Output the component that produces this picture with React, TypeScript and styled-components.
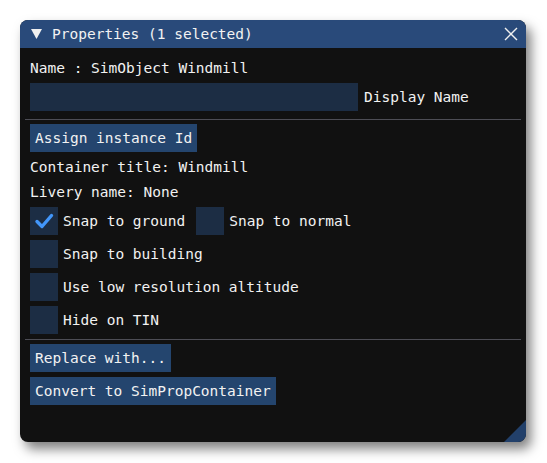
import React from "react";
import styled, { createGlobalStyle } from "styled-components";

const Global = createGlobalStyle`
  html, body { margin: 0; padding: 0; background: #ffffff; }
  body { width: 547px; height: 463px; overflow: hidden; }
`;

const Page = styled.div`
  padding: 20px 0 0 20px;
`;

const Window = styled.div`
  width: 506px;
  height: 422px;
  background: #111111;
  border-radius: 8px;
  overflow: hidden;
  position: relative;
  box-shadow: 5px 7px 12px rgba(0, 0, 0, 0.5);
  font-family: "DejaVu Sans Mono", "Liberation Mono", monospace;
  font-size: 14.5px;
  color: #f2f2f2;
  display: flex;
  flex-direction: column;
`;

const TitleBar = styled.div`
  height: 28px;
  background: #294a7a;
  display: flex;
  align-items: center;
  padding: 0 8px 0 11px;
  gap: 10px;
`;

const Title = styled.span`
  flex: 1;
  line-height: 28px;
`;

const Content = styled.div`
  padding: 10px 10px 0 10px;
  display: flex;
  flex-direction: column;
  gap: 5px;
`;

const Label = styled.div`
  height: 20px;
  line-height: 20px;
  white-space: pre;
`;

const InputRow = styled.div`
  display: flex;
  align-items: center;
  gap: 6px;
`;

const Field = styled.div`
  width: 328px;
  height: 28px;
  background: #1c2d44;
`;

const Separator = styled.div<{ $top: number }>`
  height: 1px;
  background: #4d4d55;
  margin: ${(p) => p.$top}px -5px -1px -5px;
`;

const Button = styled.div`
  align-self: flex-start;
  height: 28px;
  line-height: 28px;
  padding: 0 5px;
  background: #24456e;
  white-space: pre;
`;

const CheckRow = styled.div`
  display: flex;
  align-items: center;
  height: 28px;
`;

const Check = styled.label`
  display: flex;
  align-items: center;
  gap: 5px;
  margin-right: 11px;
`;

const Box = styled.span`
  width: 28px;
  height: 28px;
  background: #1c2d44;
  display: flex;
  align-items: center;
  justify-content: center;
`;

const Grip = styled.svg`
  position: absolute;
  right: 0;
  bottom: 0;
`;

function Checkbox({ label, checked }: { label: string; checked?: boolean }) {
  return (
    <Check>
      <Box>
        {checked && (
          <svg width="20" height="20" viewBox="0 0 20 20">
            <path d="M3 10.5 L8 15.5 L17.5 4.5" fill="none" stroke="#4296fa" strokeWidth="3.4" strokeLinecap="round" strokeLinejoin="round" />
          </svg>
        )}
      </Box>
      <span>{label}</span>
    </Check>
  );
}

export default function App() {
  return (
    <Page>
      <Global />
      <Window>
        <TitleBar>
          <svg width="11" height="10" viewBox="0 0 11 10">
            <path d="M0 0 H11 L5.5 10 Z" fill="#f0f0f0" />
          </svg>
          <Title>Properties (1 selected)</Title>
          <svg width="14" height="14" viewBox="0 0 14 14">
            <path d="M1 1 L13 13 M13 1 L1 13" stroke="#f0f0f0" strokeWidth="1.4" />
          </svg>
        </TitleBar>
        <Content>
          <Label>Name : SimObject Windmill</Label>
          <InputRow>
            <Field />
            <span>Display Name</span>
          </InputRow>
          <Separator $top={3} />
          <Button>Assign instance Id</Button>
          <Label>Container title: Windmill</Label>
          <Label>Livery name: None</Label>
          <CheckRow>
            <Checkbox label="Snap to ground" checked />
            <Checkbox label="Snap to normal" />
          </CheckRow>
          <CheckRow>
            <Checkbox label="Snap to building" />
          </CheckRow>
          <CheckRow>
            <Checkbox label="Use low resolution altitude" />
          </CheckRow>
          <CheckRow>
            <Checkbox label="Hide on TIN" />
          </CheckRow>
          <Separator $top={0} />
          <Button>Replace with...</Button>
          <Button>Convert to SimPropContainer</Button>
        </Content>
        <Grip width="22" height="22" viewBox="0 0 22 22">
          <path d="M22 0 V22 H0 Z" fill="#22406a" />
        </Grip>
      </Window>
    </Page>
  );
}
